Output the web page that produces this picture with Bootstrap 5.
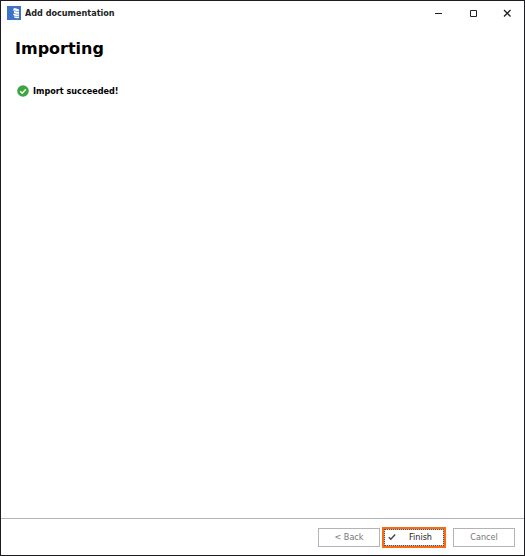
<!DOCTYPE html>
<html lang="en">
<head>
<meta charset="utf-8">
<meta name="viewport" content="width=device-width, initial-scale=1">
<title>Add documentation</title>
<link href="https://cdn.jsdelivr.net/npm/bootstrap@5.3.0/dist/css/bootstrap.min.css" rel="stylesheet">
<style>
  body { font-family: "DejaVu Sans Condensed", "DejaVu Sans", sans-serif; font-size: 9px; line-height: 12px; color: #000; }
  .wizard { border: 1px solid #1c1b1f; }
  .titlebar { height: 24px; padding-left: 6px; color: #222; }
  .win-btn { width: 34px; height: 24px; border: 0; background: none; color: #222; }
  .win-btn:hover { background: #e8e8e8; }
  .wizard-body { padding: 12px 14px; }
  .wizard-title { font-family: "DejaVu Sans", sans-serif; font-size: 16px; line-height: 24px; margin-bottom: 24px; }
  .status-row { padding-left: 2px; }
  .wizard-footer { border-top: 1px solid #b4b4b4; padding: 8px 9px 7px; }
  .wizard-btn { width: 62px; height: 19px; padding: 0 0 1px; font-size: 9px; line-height: 12px; border: 1px solid #b4b4b4; border-radius: 0; background: #fff; color: #777; }
  .wizard-btn:hover, .wizard-btn:active { border-color: #888; background: #f6f6f6; }
  .finish-btn { height: 21px; width: 64px; padding: 0; border: 2px solid #fb6a0c; background: #fff; color: #222; font-size: 9px; line-height: 12px; margin: 0 7px 0 2px; }
  .finish-inner { height: 17px; border: 1px solid #b8c0ca; padding: 0 0 1px 3px; outline: 1px dotted #555; outline-offset: -1px; }
  .finish-inner svg { margin-right: 13px; }
</style>
<script src="https://cdn.jsdelivr.net/npm/bootstrap@5.3.0/dist/js/bootstrap.bundle.min.js" defer></script>
</head>
<body>
<div class="wizard d-flex flex-column min-vh-100 bg-white">
  <header class="titlebar d-flex align-items-center">
    <svg width="14" height="14" viewBox="0 0 14 14" aria-hidden="true">
      <path fill="#3f73c6" d="M0 0h14v14H0z"/>
      <path fill="#fff" d="M7 2q2.500 0 5 1.500V12q-3 .5-5-.7V9.500L6 8.500l1-1V5L6 4z"/>
      <path fill="none" stroke="#6b93d2" stroke-width=".8" d="M7 4.500q2.500 1.200 5 1M7 7.300q2.500 1.200 5 1M7 10q2.500 .8 5 .6"/>
    </svg>
    <span class="fw-bold ms-1">Add documentation</span>
    <div class="d-flex ms-auto">
      <button type="button" class="win-btn d-flex align-items-center justify-content-center p-0" aria-label="Minimize">
        <svg width="8" height="8" viewBox="0 0 8 8"><path d="M0 4.500h7" stroke="currentColor"/></svg>
      </button>
      <button type="button" class="win-btn d-flex align-items-center justify-content-center p-0" aria-label="Maximize">
        <svg width="8" height="8" viewBox="0 0 8 8"><path d="M1.500 1.500h6v6h-6z" fill="none" stroke="currentColor"/></svg>
      </button>
      <button type="button" class="win-btn d-flex align-items-center justify-content-center p-0" aria-label="Close">
        <svg width="8" height="8" viewBox="0 0 8 8"><path d="M1 1l6.500 6.500M7.500 1L1 7.500" stroke="currentColor" stroke-width="1.300"/></svg>
      </button>
    </div>
  </header>
  <main class="wizard-body flex-grow-1">
    <h1 class="wizard-title fw-bold">Importing</h1>
    <div class="status-row d-flex align-items-center gap-1">
      <svg width="12" height="12" viewBox="0 0 12 12" aria-hidden="true" class="flex-shrink-0">
        <circle cx="6" cy="6" r="5.800" fill="#3da540"/>
        <path d="M3.200 6.200l2 2 3.700-4" fill="none" stroke="#fff" stroke-width="1.400"/>
      </svg>
      <span class="fw-bold">Import succeeded!</span>
    </div>
  </main>
  <footer class="wizard-footer d-flex justify-content-end align-items-center">
    <button type="button" class="btn wizard-btn">&lt; Back</button>
    <button type="button" class="finish-btn">
      <span class="finish-inner d-flex align-items-center">
        <svg width="8" height="8" viewBox="0 0 8 8" aria-hidden="true"><path d="M.8 4.200l2 2L7.200 1.500" fill="none" stroke="#444" stroke-width="1.400"/></svg>
        Finish
      </span>
    </button>
    <button type="button" class="btn wizard-btn">Cancel</button>
  </footer>
</div>
</body>
</html>
